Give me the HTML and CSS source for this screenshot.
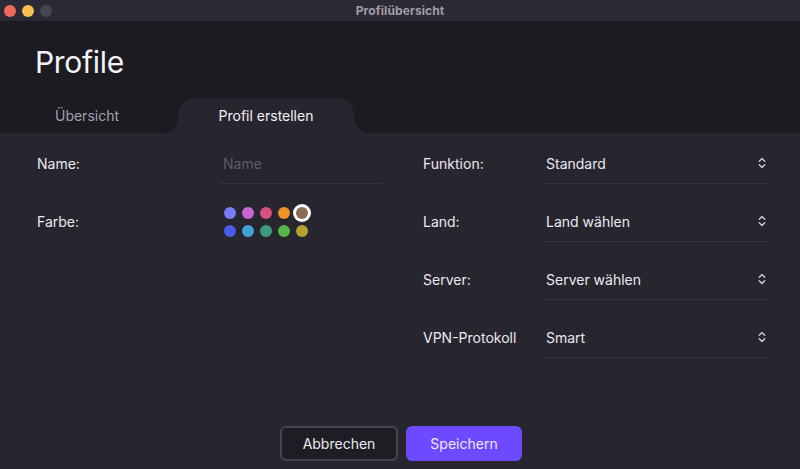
FILE: index.html
```html
<!DOCTYPE html>
<html lang="de">
<head>
<meta charset="utf-8">
<title>Profilübersicht</title>
<link rel="stylesheet" href="styles.css">
</head>
<body>
<div class="window">
  <div class="titlebar">
    <div class="lights">
      <span class="light red"></span>
      <span class="light yellow"></span>
      <span class="light gray"></span>
    </div>
    <div class="wtitle">Profilübersicht</div>
    <div></div>
  </div>
  <div class="header">
    <h1 class="htitle">Profile</h1>
    <div class="tabs">
      <div class="tab">Übersicht</div>
      <div class="tab tab-active">Profil erstellen</div>
    </div>
  </div>
  <div class="content">
    <div class="form">
      <div class="col col-left">
        <div class="label">Name:</div>
        <div class="field"><span class="placeholder">Name</span></div>
        <div class="label">Farbe:</div>
        <div class="field field-plain">
          <div class="dots">
            <span class="dot" style="background:#7b7cf6"></span>
            <span class="dot" style="background:#c865d5"></span>
            <span class="dot" style="background:#db4f80"></span>
            <span class="dot" style="background:#ee9228"></span>
            <span class="dot dot-sel" style="background:#8b6d56"></span>
            <span class="dot" style="background:#4a5ae9"></span>
            <span class="dot" style="background:#3fa2d8"></span>
            <span class="dot" style="background:#3c9b7f"></span>
            <span class="dot" style="background:#56b44b"></span>
            <span class="dot" style="background:#b3a22b"></span>
          </div>
        </div>
      </div>
      <div class="col col-right">
        <div class="label">Funktion:</div>
        <div class="field select"><span>Standard</span><svg class="chev" width="8" height="12" viewBox="0 0 8 12"><path d="M1.3 4.3 L4 1.6 L6.7 4.3 M1.3 7.7 L4 10.4 L6.7 7.7" fill="none" stroke="#cfcdd4" stroke-width="1.4" stroke-linecap="round" stroke-linejoin="round"/></svg></div>
        <div class="label">Land:</div>
        <div class="field select"><span>Land wählen</span><svg class="chev" width="8" height="12" viewBox="0 0 8 12"><path d="M1.3 4.3 L4 1.6 L6.7 4.3 M1.3 7.7 L4 10.4 L6.7 7.7" fill="none" stroke="#cfcdd4" stroke-width="1.4" stroke-linecap="round" stroke-linejoin="round"/></svg></div>
        <div class="label">Server:</div>
        <div class="field select"><span>Server wählen</span><svg class="chev" width="8" height="12" viewBox="0 0 8 12"><path d="M1.3 4.3 L4 1.6 L6.7 4.3 M1.3 7.7 L4 10.4 L6.7 7.7" fill="none" stroke="#cfcdd4" stroke-width="1.4" stroke-linecap="round" stroke-linejoin="round"/></svg></div>
        <div class="label">VPN-Protokoll</div>
        <div class="field select"><span>Smart</span><svg class="chev" width="8" height="12" viewBox="0 0 8 12"><path d="M1.3 4.3 L4 1.6 L6.7 4.3 M1.3 7.7 L4 10.4 L6.7 7.7" fill="none" stroke="#cfcdd4" stroke-width="1.4" stroke-linecap="round" stroke-linejoin="round"/></svg></div>
      </div>
    </div>
    <div class="footer">
      <button class="btn btn-secondary">Abbrechen</button>
      <button class="btn btn-primary">Speichern</button>
    </div>
  </div>
</div>
</body>
</html>
```

FILE: styles.css
```css
* { box-sizing: border-box; }
html, body { margin: 0; padding: 0; }
body {
  width: 800px;
  height: 469px;
  overflow: hidden;
  background: #27252e;
  font-family: Inter, "Noto Sans", "Liberation Sans", sans-serif;
  color: #e9e7ee;
}
.window { display: flex; flex-direction: column; height: 469px; }

.titlebar {
  height: 22px;
  flex: none;
  background: #2b2933;
  display: grid;
  grid-template-columns: 1fr auto 1fr;
  align-items: center;
  border-bottom: 1px solid #1a1920;
}
.lights { display: flex; gap: 6px; padding-left: 4px; align-items: center; }
.light { width: 12px; height: 12px; border-radius: 50%; display: block; }
.red { background: #ee6a5f; }
.yellow { background: #f5c04f; }
.gray { background: #47454d; }
.wtitle { font-size: 12px; font-weight: 700; color: #a09ea7; letter-spacing: 0.1px; }

.header {
  height: 111px;
  flex: none;
  background: #1c1b22;
  display: flex;
  flex-direction: column;
  justify-content: space-between;
}
.htitle {
  margin: 0;
  padding: 21px 0 0 35px;
  font-size: 30px;
  font-weight: 400;
  line-height: 38px;
  color: #f4f3f7;
  letter-spacing: -0.3px;
}
.tabs { display: flex; align-items: flex-end; height: 35px; }
.tab {
  width: 174px;
  height: 35px;
  display: flex;
  align-items: center;
  justify-content: center;
  font-size: 14px;
  color: #a3a1aa;
}
.tab-active {
  position: relative;
  width: 176px;
  margin-left: 4px;
  background: #27252e;
  border-radius: 17px 17px 0 0;
  color: #f2f1f5;
}
.tab-active::before,
.tab-active::after {
  content: "";
  position: absolute;
  bottom: 0;
  width: 14px;
  height: 14px;
}
.tab-active::before {
  left: -14px;
  background: radial-gradient(circle at 0 0, transparent 13.5px, #27252e 14px);
}
.tab-active::after {
  right: -14px;
  background: radial-gradient(circle at 100% 0, transparent 13.5px, #27252e 14px);
}

.content { flex: 1; display: flex; flex-direction: column; }
.form { flex: 1; display: flex; padding: 10px 32px 0 37px; }
.col { display: grid; row-gap: 17px; align-content: start; }
.col-left { grid-template-columns: 183px 163px; }
.col-right { grid-template-columns: 121px 224px; margin-left: 40px; }
.label {
  height: 41px;
  display: flex;
  align-items: center;
  font-size: 14px;
  color: #ebe9f0;
}
.field {
  height: 41px;
  border-bottom: 1px solid #36343e;
  display: flex;
  align-items: center;
  font-size: 14px;
  color: #ebe9f0;
  padding-left: 2px;
}
.field-plain { border-bottom: none; padding-left: 4px; }
.placeholder { color: #5f5d68; padding-left: 1px; }
.select { justify-content: space-between; padding-right: 2px; }
.chev { display: block; }

.dots {
  display: grid;
  grid-template-columns: repeat(5, 12px);
  gap: 6px;
}
.dot { width: 12px; height: 12px; border-radius: 50%; display: block; }
.dot-sel { box-shadow: 0 0 0 3px #ffffff; }

.footer {
  display: flex;
  justify-content: center;
  gap: 8px;
  padding: 0 0 8px 2px;
}
.btn {
  height: 35px;
  border-radius: 6px;
  font-family: inherit;
  font-size: 14px;
  padding: 0;
  cursor: pointer;
}
.btn-secondary {
  width: 118px;
  background: #1e1d24;
  border: 2px solid #46444f;
  color: #ecebf0;
}
.btn-primary {
  width: 116px;
  background: #6d4aff;
  border: none;
  color: #ece8ff;
}
```
